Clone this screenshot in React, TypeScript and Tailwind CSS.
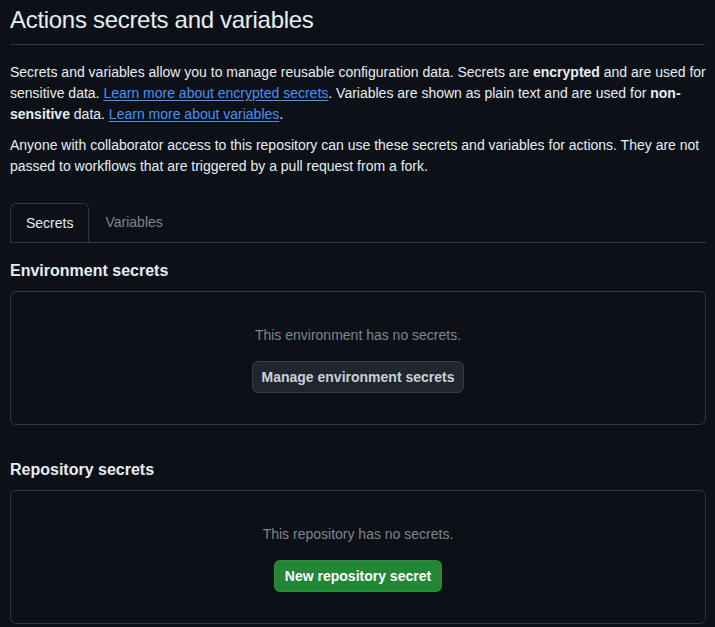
export default function App() {
  return (
    <div
      className="min-h-[627px] bg-[#0d1117] text-[#e6edf3] px-[10px] pt-[4px]"
      style={{ fontFamily: '"Segoe UI", "Liberation Sans", Arial, sans-serif' }}
    >
      {/* Header */}
      <div className="border-b border-[#30363d] pb-[8px] mb-[17px]">
        <h2 className="text-[24px] leading-[32px] font-normal tracking-[-0.3px]">Actions secrets and variables</h2>
      </div>

      <p className="text-[14px] leading-[21px] mb-[10px] w-[696px]">
        Secrets and variables allow you to manage reusable configuration data. Secrets are{' '}
        <strong className="font-semibold">encrypted</strong> and are used for sensitive data.{' '}
        <a href="#" className="text-[#4493f8] underline underline-offset-2">Learn more about encrypted secrets</a>.
        Variables are shown as plain text and are used for{' '}
        <strong className="font-semibold">non-sensitive</strong> data.{' '}
        <a href="#" className="text-[#4493f8] underline underline-offset-2">Learn more about variables</a>.
      </p>
      <p className="text-[14px] leading-[21px] w-[696px]">
        Anyone with collaborator access to this repository can use these secrets and variables for actions. They are
        not passed to workflows that are triggered by a pull request from a fork.
      </p>

      {/* Tabs */}
      <div className="flex mt-[26px] border-b border-[#30363d] w-[696px]">
        <div className="h-[39px] px-[15px] flex items-center text-[14px] border border-[#30363d] border-b-0 rounded-t-[6px] -mb-px bg-[#0d1117]">
          Secrets
        </div>
        <div className="h-[39px] px-[16px] flex items-center text-[14px] text-[#7d8590]">Variables</div>
      </div>

      <Section title="Environment secrets" empty="This environment has no secrets.">
        <button className="h-[32px] px-[9px] rounded-[6px] bg-[#21262d] border border-[#363b42] text-[14px] font-semibold text-[#c9d1d9]">
          Manage environment secrets
        </button>
      </Section>

      <Section title="Repository secrets" empty="This repository has no secrets.">
        <button className="h-[32px] px-[10px] rounded-[6px] bg-[#238636] border border-[#2ea043]/40 text-[14px] font-semibold text-white">
          New repository secret
        </button>
      </Section>
    </div>
  );
}

function Section({ title, empty, children }: { title: string; empty: string; children: React.ReactNode }) {
  return (
    <div className="w-[696px] mt-[16px] mb-[33px]">
      <h3 className="text-[16px] leading-[24px] font-semibold mb-[8px]">{title}</h3>
      <div className="border border-[#30363d] rounded-[6px] h-[134px] flex flex-col items-center pt-[33px]">
        <p className="text-[14px] leading-[20px] text-[#7d8590] mb-[16px]">{empty}</p>
        {children}
      </div>
    </div>
  );
}
